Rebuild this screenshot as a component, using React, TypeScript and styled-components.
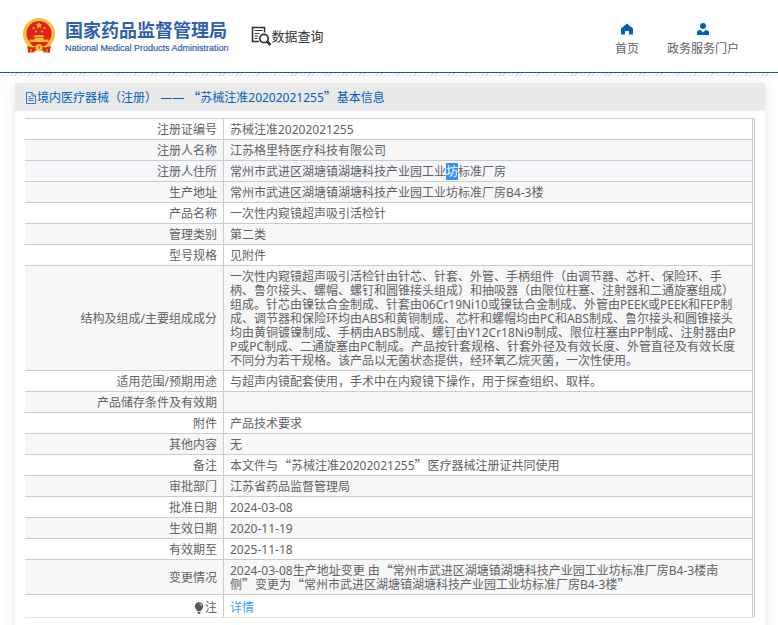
import React from "react";
import styled, { createGlobalStyle, css } from "styled-components";

const Global = createGlobalStyle`
  * { box-sizing: border-box; }
  html { background: #fff; }
  body {
    margin: 0;
    font-family: "Noto Sans", "Noto Sans CJK SC", sans-serif;
    font-size: 12px;
    line-height: 14px;
    color: #606266;
    text-spacing-trim: space-all;
    overflow-x: hidden;
    scrollbar-width: none;
  }
`;

const Header = styled.header`
  display: flex;
  align-items: center;
  height: 73px;
  padding: 0 39px 0 23px;
  border-bottom: 1px solid #0060bf;
`;

const Brand = styled.a`
  display: flex;
  align-items: center;
  gap: 10px;
  color: #2f5fae;
  text-decoration: none;
`;

const BrandText = styled.div`
  display: flex;
  flex-direction: column;
  white-space: nowrap;
`;

const BrandName = styled.strong`
  font: 700 18px/22px "Noto Sans CJK SC", sans-serif;
`;

const BrandLatin = styled.span`
  padding-top: 2px;
  font: 9px/12px "Liberation Sans", sans-serif;
  -webkit-text-stroke: 0.2px #2f5fae;
`;

const Section = styled.h1`
  display: flex;
  align-items: center;
  margin: 0 0 0 22px;
  font: 400 13px/20px "Noto Sans CJK SC", sans-serif;
  color: #333;
  white-space: nowrap;
`;

const Nav = styled.nav`
  display: flex;
  gap: 28px;
  margin-left: auto;
  padding-top: 7px;
`;

const NavLink = styled.a`
  display: flex;
  flex-direction: column;
  align-items: center;
  gap: 6px;
  line-height: 16px;
  color: #606266;
  text-decoration: none;
  white-space: nowrap;
`;

const Hatch = styled.div`
  height: 3px;
  background: repeating-linear-gradient(135deg, #dcdcdc 0 1px, #fff 1px 3px);
`;

const Card = styled.main`
  margin: 7px 13px 0 15px;
  padding-bottom: 20px;
  background: #fff;
  box-shadow: 0 2px 12px rgba(0, 0, 0, 0.1);
`;

const CardTitle = styled.h2`
  display: flex;
  align-items: center;
  height: 28px;
  margin: 0;
  padding: 2px 10px 0;
  border-bottom: 1px solid #ebeef5;
  background: #e9e9e9;
  font-size: 12px;
  font-weight: 400;
  color: #0060bf;
`;

const TableWrap = styled.div`
  padding: 7px 10px 0;
`;

const Table = styled.table`
  width: 100%;
  padding-right: 1px;
  border-collapse: separate;
  border-spacing: 0;
  border-top: 1px solid #ccc;
  border-right: 1px solid #ccc;
`;

const Row = styled.tr<{ $hover?: boolean }>`
  background: #fff;
  &:nth-child(even) { background: #f7f7f7; }
  ${(p) => p.$hover && css`background: #f5f7fa;`}
`;

const cell = css`
  padding: 4px 6px 2px;
  border-right: 1px solid #ccc;
  border-bottom: 1px solid #ccc;
  tr:last-child > & { padding: 6px 6px 2px; border-bottom-color: #e6e6e6; }
`;

const Label = styled.th`
  ${cell}
  width: 199px;
  font-weight: 400;
  text-align: right;
`;

const Value = styled.td`
  ${cell}
  padding-right: 10px;
  word-break: break-all;
`;

const Wide = styled.span`
  font-family: "Noto Sans CJK SC", sans-serif;
  font-size: 13px;
  line-height: 0;
`;

const Dash = styled.span`
  font-family: "DejaVu Sans", sans-serif;
  line-height: 0;
`;

const Selected = styled.mark`
  background: #3390ff;
  color: #fff;
`;

const DetailLink = styled.a`
  color: #409eff;
  text-decoration: none;
`;

const NoteLabel = styled.span`
  display: inline-flex;
  align-items: center;
  vertical-align: top;
`;

const Emblem = () => (
  <svg width="32" height="36" viewBox="0 0 32 36" aria-hidden="true">
    <path d="M6 26 5 34l5 .5L13 31h6l3 3.500 5-.5-1-8z" fill="#d9261c" />
    <circle cx="16" cy="16" r="16" fill="#eebb35" />
    <circle cx="16" cy="16" r="14" fill="none" stroke="#f8d45a" strokeWidth="1" strokeDasharray="2 1" />
    <circle cx="16" cy="15.500" r="12.500" fill="#e3231b" />
    <path d="m16 4 .9 2.300 2.500.1-2 1.600.7 2.400-2.100-1.400-2.100 1.400.7-2.400-2-1.600 2.500-.1z" fill="#f8c93b" />
    <g fill="#f3b733">
      <circle cx="10.500" cy="10" r="1" /><circle cx="21.500" cy="10" r="1" />
      <circle cx="13" cy="13.500" r="1" /><circle cx="19" cy="13.500" r="1" />
      <path d="M12 17h8l1.500 2h-11zM11.500 19.500h9v2h5v2.500h-19v-2.500h5z" />
    </g>
    <path d="M7 25h18l-3 3H10z" fill="#d9261c" />
    <path d="M4 28q7 3 9-.5h6q2 3.500 9 .5l-1.500 7-7.500-2.500h-6L5.500 35z" fill="#e3231b" />
    <circle cx="16" cy="29.500" r="3.500" fill="#f2c33b" />
    <circle cx="16" cy="29.500" r="1.300" fill="#dd7a25" />
    <path d="M8 31v4M24 31v4M12 33l-1 2M20 33l1 2" stroke="#e9b42f" strokeWidth="1.200" />
  </svg>
);

const QueryIcon = () => (
  <svg width="21" height="20" viewBox="0 0 21 20" fill="none" stroke="#2d2d38" aria-hidden="true">
    <path d="M8 15.500H1.500V1.500h12v5" strokeWidth="1.500" />
    <path d="M3.500 4.500h8M3.500 7.500h5M3.500 10h3.500M3.500 12.500h3" strokeWidth="1.100" />
    <circle cx="13" cy="12.500" r="4.200" strokeWidth="1.700" />
    <path d="m16 15.500 3.500 3.500" strokeWidth="2.500" />
  </svg>
);

const HomeIcon = () => (
  <svg width="12" height="12" viewBox="0 0 12 12" aria-hidden="true">
    <path d="M6 .5 12 5.500v6H8V8H4v3.500H0v-6z" fill="#0060bf" />
  </svg>
);

const UserIcon = () => (
  <svg width="12" height="12" viewBox="0 0 12 12" fill="#0060bf" aria-hidden="true">
    <circle cx="6" cy="3" r="3" />
    <path d="M0 12V9.500Q0 7 3.500 7L6 9.500 8.500 7Q12 7 12 9.500V12z" />
  </svg>
);

const DocIcon = () => (
  <svg width="12" height="12" viewBox="0 0 12 12" fill="none" stroke="#0060bf" aria-hidden="true">
    <path d="M1.500 .5h5.500l3.500 3.500v7.500h-9zM7 .5v3.500h3.500M3.500 4.500h2M3.500 6.500h5M3.500 8.500h5" strokeWidth="0.800" />
  </svg>
);

const BulbIcon = () => (
  <svg width="12" height="12" viewBox="0 0 12 12" aria-hidden="true">
    <path d="M6 0a4.300 4.300 0 0 1 3 7.300L7.800 9H4.200L3 7.300A4.300 4.300 0 0 1 6 0zM4.500 9.700h3v1L6.500 12h-1l-1-1.300z" fill="#55585c" />
    <path d="M6.500 1.700q1.700.3 2 2" fill="none" stroke="#fff" strokeWidth="0.900" />
  </svg>
);

const wide = (text: string) =>
  text.split(/([“”]|—+)/).map((part, i) => {
    if (i % 2 === 0) return part;
    return part.startsWith("—") ? <Dash key={i}>{part}</Dash> : <Wide key={i}>{part}</Wide>;
  });

type Item = { label: React.ReactNode; value: React.ReactNode; hover?: boolean };

const items: Item[] = [
  { label: "注册证编号", value: "苏械注准20202021255" },
  { label: "注册人名称", value: "江苏格里特医疗科技有限公司" },
  {
    label: "注册人住所",
    value: <>常州市武进区湖塘镇湖塘科技产业园工业<Selected>坊</Selected>标准厂房</>,
    hover: true,
  },
  { label: "生产地址", value: "常州市武进区湖塘镇湖塘科技产业园工业坊标准厂房B4-3楼" },
  { label: "产品名称", value: "一次性内窥镜超声吸引活检针" },
  { label: "管理类别", value: "第二类" },
  { label: "型号规格", value: "见附件" },
  {
    label: "结构及组成/主要组成成分",
    value:
      "一次性内窥镜超声吸引活检针由针芯、针套、外管、手柄组件（由调节器、芯杆、保险环、手柄、鲁尔接头、螺帽、螺钉和圆锥接头组成）和抽吸器（由限位柱塞、注射器和二通旋塞组成）组成。针芯由镍钛合金制成、针套由06Cr19Ni10或镍钛合金制成、外管由PEEK或PEEK和FEP制成、调节器和保险环均由ABS和黄铜制成、芯杆和螺帽均由PC和ABS制成、鲁尔接头和圆锥接头均由黄铜镀镍制成、手柄由ABS制成、螺钉由Y12Cr18Ni9制成、限位柱塞由PP制成、注射器由PP或PC制成、二通旋塞由PC制成。产品按针套规格、针套外径及有效长度、外管直径及有效长度不同分为若干规格。该产品以无菌状态提供，经环氧乙烷灭菌，一次性使用。",
  },
  { label: "适用范围/预期用途", value: "与超声内镜配套使用，手术中在内窥镜下操作，用于探查组织、取样。" },
  { label: "产品储存条件及有效期", value: "" },
  { label: "附件", value: "产品技术要求" },
  { label: "其他内容", value: "无" },
  { label: "备注", value: "本文件与“苏械注准20202021255”医疗器械注册证共同使用" },
  { label: "审批部门", value: "江苏省药品监督管理局" },
  { label: "批准日期", value: "2024-03-08" },
  { label: "生效日期", value: "2020-11-19" },
  { label: "有效期至", value: "2025-11-18" },
  {
    label: "变更情况",
    value:
      "2024-03-08生产地址变更 由“常州市武进区湖塘镇湖塘科技产业园工业坊标准厂房B4-3楼南侧”变更为“常州市武进区湖塘镇湖塘科技产业园工业坊标准厂房B4-3楼”",
  },
  { label: <NoteLabel><BulbIcon />注</NoteLabel>, value: <DetailLink href="#detail">详情</DetailLink> },
];

export default function App() {
  return (
    <>
      <Global />
      <Header>
        <Brand href="#home">
          <Emblem />
          <BrandText>
            <BrandName>国家药品监督管理局</BrandName>
            <BrandLatin>National Medical Products Administration</BrandLatin>
          </BrandText>
        </Brand>
        <Section><QueryIcon />数据查询</Section>
        <Nav>
          <NavLink href="#home"><HomeIcon />首页</NavLink>
          <NavLink href="#portal"><UserIcon />政务服务门户</NavLink>
        </Nav>
      </Header>
      <Hatch />
      <Card>
        <CardTitle>
          <DocIcon />
          <span>{wide("境内医疗器械（注册） —— “苏械注准20202021255”基本信息")}</span>
        </CardTitle>
        <TableWrap>
          <Table>
            <tbody>
              {items.map((item, i) => (
                <Row key={i} $hover={item.hover}>
                  <Label scope="row">{item.label}</Label>
                  <Value>{typeof item.value === "string" ? wide(item.value) : item.value}</Value>
                </Row>
              ))}
            </tbody>
          </Table>
        </TableWrap>
      </Card>
    </>
  );
}
